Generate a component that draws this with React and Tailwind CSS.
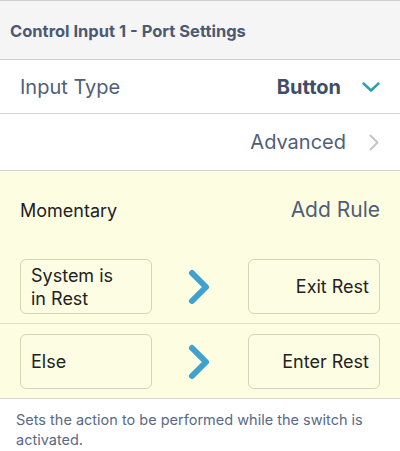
import React from 'react';

const FONT = { fontFamily: 'Inter, "Open Sans", sans-serif' };

function RuleBox({ children, align = 'left' }) {
  return (
    <div
      className={`w-[132px] h-[55px] rounded-[6px] border border-[#d6d4b6] bg-[#fdfde3] flex items-center px-[10px] text-[18px] leading-[23px] text-[#222] ${
        align === 'right' ? 'justify-end text-right' : 'justify-start'
      }`}
    >
      <span>{children}</span>
    </div>
  );
}

function Arrow() {
  return (
    <svg width="26" height="38" viewBox="0 0 26 38" className="block">
      <path
        d="M5 5 L19 19 L5 33"
        fill="none"
        stroke="#3ea1cf"
        strokeWidth="6"
        strokeLinecap="round"
        strokeLinejoin="round"
      />
    </svg>
  );
}

function RuleRow({ from, to, last }) {
  return (
    <div className={`flex items-center justify-between px-[20px] pt-[10px] pb-[9px] ${last ? '' : 'border-b border-[#e4e2c4]'}`}>
      <RuleBox>{from}</RuleBox>
      <Arrow />
      <RuleBox align="right">{to}</RuleBox>
    </div>
  );
}

export default function App() {
  return (
    <div className="w-[400px] h-[451px] bg-white overflow-hidden" style={FONT}>
      {/* section header */}
      <div className="h-[60px] border-t border-b border-[#cfcfd2] bg-[#f5f5f6] flex items-center pl-[10px] pt-[2px]">
        <span className="text-[16.5px] font-bold text-[#4b5a72]">Control Input 1 - Port Settings</span>
      </div>

      {/* input type */}
      <div className="h-[54px] border-b border-[#d4d4d6] flex items-center pl-[20px] pr-[20px]">
        <span className="text-[20px] text-[#4f5e77]">Input Type</span>
        <span className="ml-auto text-[20px] font-bold text-[#3f4e67]">Button</span>
        <svg width="18" height="10" viewBox="0 0 18 10" className="ml-[21px]">
          <path d="M1.5 1.5 L9 8.5 L16.5 1.5" fill="none" stroke="#2a9fae" strokeWidth="2.4" strokeLinecap="round" strokeLinejoin="round" />
        </svg>
      </div>

      {/* advanced */}
      <div className="h-[57px] border-b border-[#d4d4d6] flex items-center justify-end pr-[21px]">
        <span className="text-[20px] text-[#4f5e77]">Advanced</span>
        <svg width="10" height="17" viewBox="0 0 10 17" className="ml-[23px]">
          <path d="M1.5 1.5 L8.5 8.5 L1.5 15.5" fill="none" stroke="#c4c4c8" strokeWidth="2" strokeLinecap="round" strokeLinejoin="round" />
        </svg>
      </div>

      {/* rules */}
      <div className="bg-[#fdfde2] border-b border-[#d4d4d6]">
        <div className="h-[78px] flex items-center justify-between px-[20px]">
          <span className="text-[18px] text-[#222]">Momentary</span>
          <span className="text-[21px] text-[#4f5e77]">Add Rule</span>
        </div>
        <RuleRow from={<>System is<br />in Rest</>} to="Exit Rest" />
        <RuleRow from="Else" to="Enter Rest" last />
      </div>

      {/* footer */}
      <div className="px-[16px] pt-[11px] pb-[5px] border-b border-[#cfcfd2] text-[14.5px] leading-[20px] text-[#5a6985]">
        Sets the action to be performed while the switch is activated.
      </div>
    </div>
  );
}
